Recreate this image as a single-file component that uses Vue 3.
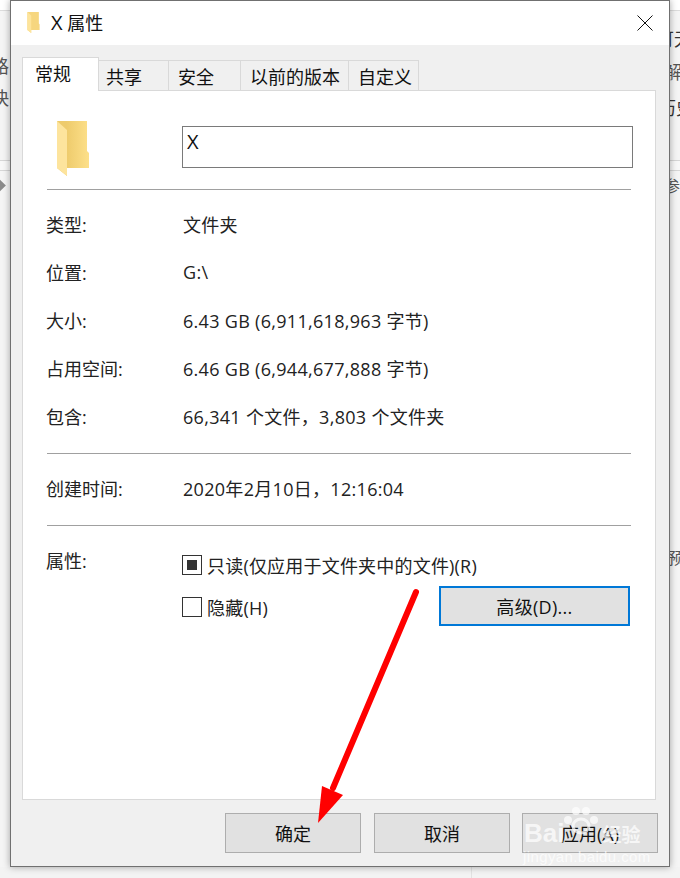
<script setup>
const tabs = [
  { label: '常规', width: 77, pad: 12, active: true },
  { label: '共享', width: 70, pad: 7 },
  { label: '安全', width: 72, pad: 9 },
  { label: '以前的版本', width: 108, pad: 9 },
  { label: '自定义', width: 70, pad: 9 }
]
const rows1 = [
  ['类型:', '文件夹'],
  ['位置:', 'G:\\'],
  ['大小:', '6.43 GB (6,911,618,963 字节)'],
  ['占用空间:', '6.46 GB (6,944,677,888 字节)'],
  ['包含:', '66,341 个文件，3,803 个文件夹']
]
</script>

<template>
  <div class="page">
    <div class="top">
      <div class="strip left">
        <div class="bg-cap"></div>
        <span class="frag f-l1">路</span>
        <span class="frag f-l2">快</span>
        <div class="bg-lines l-lines"></div>
        <span class="chev"></span>
      </div>

      <div class="window">
        <div class="titlebar">
          <svg class="title-icon" width="15" height="21" viewBox="0 0 34 55">
            <path d="M1 0H31V30L33 32V47H11V55L1 47Z" fill="#f6d67f" />
            <path d="M1 0L11 9V55L1 47Z" fill="#fde49b" />
          </svg>
          <span class="title-text"><span class="title-x">X</span> 属性</span>
          <svg class="close" width="16" height="16" viewBox="0 0 16 16">
            <path d="M0.5 0.5L15.5 15.5M15.5 0.5L0.5 15.5" stroke="#111" stroke-width="1" fill="none" />
          </svg>
        </div>

        <div class="body">
          <div class="tabs">
            <div
              v-for="t in tabs"
              :key="t.label"
              class="tab"
              :class="{ active: t.active }"
              :style="{ width: t.width + 'px', paddingLeft: t.pad + 'px' }"
            >{{ t.label }}</div>
          </div>

          <div class="panel">
            <div class="head">
              <svg class="folder" width="34" height="55" viewBox="0 0 34 55">
                <defs>
                  <linearGradient id="fg" x1="0" x2="1" y1="0" y2="0">
                    <stop offset="0.3" stop-color="#eecb6c" />
                    <stop offset="1" stop-color="#fde08a" />
                  </linearGradient>
                </defs>
                <path d="M1 0H31V30L33 32V47H11V55L1 47Z" fill="url(#fg)" />
                <path d="M1 0L11 9V55L1 47Z" fill="#fde49d" />
              </svg>
              <div class="namebox">X</div>
            </div>
            <div class="sep"></div>

            <div class="rows rows1">
              <div v-for="r in rows1" :key="r[0]" class="row">
                <span class="label">{{ r[0] }}</span>
                <span class="value">{{ r[1] }}</span>
              </div>
            </div>
            <div class="sep"></div>

            <div class="row created">
              <span class="label">创建时间:</span>
              <span class="value">2020年2月10日，12:16:04</span>
            </div>
            <div class="sep"></div>

            <div class="attrs">
              <span class="label attr-label">属性:</span>
              <div class="attr-body">
                <div class="check-row">
                  <span class="check"><span class="fill"></span></span>
                  <span class="check-text">只读(仅应用于文件夹中的文件)(R)</span>
                </div>
                <div class="check-row second">
                  <span class="check"></span>
                  <span class="check-text">隐藏(H)</span>
                  <button class="btn adv">高级(D)...</button>
                </div>
              </div>
            </div>
          </div>

          <div class="footer">
            <button class="btn act">确定</button>
            <button class="btn act">取消</button>
            <button class="btn act">应用(A)</button>
          </div>
        </div>
      </div>

      <div class="strip right">
        <div class="bg-cap"></div>
        <span class="frag f-r1">可无</span>
        <span class="frag f-r2">解</span>
        <span class="frag f-r3">历史</span>
        <div class="bg-lines r-lines"></div>
        <span class="frag f-r4">参</span>
        <span class="frag f-r5">预</span>
      </div>
    </div>
    <div class="bottom"><span class="bottom-line"></span></div>

    <svg class="arrow" width="680" height="878" viewBox="0 0 680 878">
      <path d="M416 592L333 788" stroke="#ff0000" stroke-width="6" stroke-linecap="round" fill="none" />
      <path d="M322 786L343 795L318 823Z" fill="#ff0000" />
    </svg>

    <div class="mark">
      <svg class="paw" width="36" height="30" viewBox="0 0 36 30">
        <ellipse cx="18" cy="21" rx="8" ry="7" fill="none" stroke="#fff" stroke-width="3" />
        <circle cx="5" cy="15" r="4" fill="#fff" />
        <circle cx="13" cy="6" r="4" fill="#fff" />
        <circle cx="23" cy="6" r="4" fill="#fff" />
        <circle cx="31" cy="15" r="4" fill="#fff" />
      </svg>
      <div class="mark-main"><span class="mark-bai">Bai</span><span class="mark-jy">经验</span></div>
      <div class="mark-url">jingyan.baidu.com</div>
    </div>
  </div>
</template>

<style>
html, body { margin: 0; background: #f3f3f3; }
</style>

<style scoped>
.page {
  position: relative;
  width: 680px;
  height: 878px;
  overflow: hidden;
  background: #f3f3f3;
  font-family: "Open Sans", "Noto Sans CJK SC", sans-serif;
  font-size: 18px;
  color: #111;
}
.top { display: flex; height: 867px; }
.strip {
  width: 10px;
  flex: none;
  position: relative;
  overflow: hidden;
  color: #555;
  font-family: "Noto Sans CJK SC", sans-serif;
  font-size: 18px;
  background: #f5f5f5;
}
.bg-cap { height: 10px; background: #fff; border-bottom: 1px solid #dcdcdc; }
.frag { position: absolute; white-space: nowrap; line-height: 20px; }
.f-l1 { left: -9px; top: 55px; }
.f-l2 { left: -9px; top: 87px; }
.f-r1 { left: -14px; top: 28px; color: #333; }
.f-r2 { left: -6px; top: 61px; }
.f-r3 { left: -12px; top: 97px; color: #333; }
.f-r4 { left: -6px; top: 175px; font-size: 16px; }
.f-r5 { left: -2px; top: 547px; font-size: 16px; }
.bg-lines {
  position: absolute;
  left: 0;
  right: 0;
  top: 160px;
  height: 9px;
  border-top: 1px solid #d6d6d6;
  border-bottom: 1px solid #d6d6d6;
}
.l-lines { background: #f8f8f8; }
.r-lines { background: #f8f8f8; }
.chev {
  position: absolute;
  left: -5px;
  top: 181px;
  width: 9px;
  height: 9px;
  background: #8a8a8a;
  transform: rotate(45deg);
}
.window {
  width: 660px;
  flex: none;
  box-sizing: border-box;
  border: 1px solid #707070;
  background: #f0f0f0;
  display: flex;
  flex-direction: column;
  box-shadow: 0 0 7px rgba(0, 0, 0, 0.35);
  position: relative;
  z-index: 1;
}
.titlebar {
  height: 44px;
  flex: none;
  background: #fff;
  display: flex;
  align-items: center;
  padding: 0 16px 2px 15px;
  box-sizing: border-box;
}
.title-icon { flex: none; }
.title-text { margin-left: 10px; font-size: 18px; white-space: pre; }
.title-x { font-size: 20px; }
.close { margin-left: auto; margin-top: 1px; }
.body { flex: 1; display: flex; flex-direction: column; padding: 0 13px 0 11px; }
.tabs { display: flex; height: 45px; align-items: flex-end; }
.tab {
  box-sizing: border-box;
  height: 30px;
  border: 1px solid #d9d9d9;
  border-bottom: 0;
  border-left: 0;
  line-height: 33px;
}
.tab.active {
  height: 34px;
  background: #fff;
  border: 1px solid #d9d9d9;
  border-bottom: 0;
  line-height: 33px;
  margin-bottom: -1px;
  position: relative;
  z-index: 1;
}
.panel {
  height: 710px;
  flex: none;
  box-sizing: border-box;
  background: #fff;
  border: 1px solid #d9d9d9;
  padding: 30px 24px 0 23px;
}
.head { display: flex; align-items: flex-start; height: 68px; }
.folder { flex: none; margin-left: 10px; }
.namebox {
  flex: none;
  box-sizing: border-box;
  margin: 5px 0 0 92px;
  width: 451px;
  height: 42px;
  border: 1px solid #7a7a7a;
  padding: 3px 4px;
  line-height: 24px;
  font-size: 20px;
}
.sep { height: 1px; background: #a0a0a0; margin-left: 1px; }
.rows1 { padding-top: 10px; height: 263px; box-sizing: border-box; }
.row { display: flex; height: 48px; align-items: center; }
.label { width: 137px; flex: none; color: #222; }
.value { color: #222; letter-spacing: 0.3px; white-space: nowrap; }
.created { height: 71px; padding-bottom: 4px; box-sizing: border-box; }
.attrs { display: flex; padding-top: 15px; }
.attr-label { line-height: 40px; height: 40px; }
.attr-body { flex: 1; padding-top: 14px; position: relative; }
.check-row { display: flex; align-items: center; height: 20px; }
.second { margin-top: 22px; }
.check {
  box-sizing: border-box;
  width: 20px;
  height: 20px;
  border: 1px solid #333;
  display: flex;
  align-items: center;
  justify-content: center;
  margin-left: -1px;
  flex: none;
}
.fill { width: 10px; height: 10px; background: #333; }
.check-text { margin-left: 5px; color: #222; letter-spacing: 0.2px; white-space: nowrap; }
.btn {
  font: inherit;
  color: #111;
  background: #e1e1e1;
  border: 1px solid #adadad;
  padding: 0;
  box-sizing: border-box;
}
.adv {
  flex: none;
  width: 191px;
  height: 40px;
  border: 2px solid #0078d7;
  margin: -2px 1px 0 auto;
  letter-spacing: 0.3px;
}
.footer {
  display: flex;
  padding: 13px 0 0 203px;
  gap: 13px;
  margin-right: -3px;
}
.act { width: 136px; height: 40px; flex: none; }
.act:nth-child(3) { margin-left: -1px; }
.bottom { height: 11px; position: relative; background: #f3f3f3; }
.bottom-line { position: absolute; left: 471px; top: 0; width: 1px; height: 11px; background: #e2e2e2; }
.arrow { position: absolute; left: 0; top: 0; z-index: 3; pointer-events: none; }
.mark {
  position: absolute;
  left: 520px;
  top: 805px;
  width: 126px;
  height: 60px;
  z-index: 4;
  pointer-events: none;
  color: #fff;
  opacity: 0.72;
}
.paw { position: absolute; left: 43px; top: 0; }
.mark-main {
  position: absolute;
  left: 4px;
  top: 14px;
  display: flex;
  align-items: center;
  height: 28px;
  white-space: nowrap;
  font-family: "Liberation Sans", sans-serif;
  font-weight: 700;
  font-size: 26px;
}
.mark-jy { font-family: "Noto Sans CJK SC", sans-serif; font-size: 19px; font-weight: 700; margin-left: 38px; }
.mark-url {
  position: absolute;
  left: 3px;
  top: 43px;
  font-family: "Liberation Sans", sans-serif;
  font-size: 15px;
  white-space: nowrap;
  letter-spacing: 0.4px;
}
</style>
